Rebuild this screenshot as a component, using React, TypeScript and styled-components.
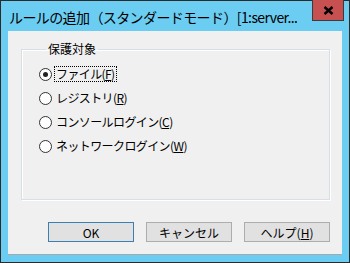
import React from "react";
import styled, { createGlobalStyle } from "styled-components";

const Global = createGlobalStyle`
  html, body { margin: 0; padding: 0; background: #ffffff; }
  body { font-family: "Noto Sans CJK JP", "Noto Sans", sans-serif; }
`;

const Window = styled.div`
  width: 350px;
  height: 263px;
  box-sizing: border-box;
  border: 1px solid #2b2b2b;
  background: #6bcdf2;
  display: flex;
  flex-direction: column;
  padding: 0 7px 7px 7px;
`;

const TitleBar = styled.div`
  height: 30px;
  display: flex;
  align-items: flex-start;
  justify-content: space-between;
`;

const Title = styled.div`
  font-family: "Noto Sans CJK JP", sans-serif;
  font-size: 14px;
  color: #000;
  line-height: 32px;
  margin-left: 1px;
  white-space: nowrap;
  overflow: hidden;
  letter-spacing: -0.6px;
`;

const CloseButton = styled.div`
  flex-shrink: 0;
  width: 32px;
  height: 21px;
  margin-top: -1px;
  margin-right: -2px;
  box-sizing: border-box;
  background: #c75050;
  border: 1px solid #3c3c3c;
  border-top: none;
  display: flex;
  align-items: center;
  justify-content: center;
`;

const Client = styled.div`
  flex: 1;
  background: #f0f0f0;
  border-bottom: 1px solid #a9a9a9;
  display: flex;
  flex-direction: column;
  padding: 11px 12px 0 13px;
`;

const Group = styled.fieldset`
  margin: 0;
  height: 158px;
  box-sizing: border-box;
  border: 1px solid #d5dfe5;
  box-shadow: inset 1px 1px 0 #ffffff, 1px 1px 0 #ffffff;
  padding: 6px 0 0 17px;
  display: flex;
  flex-direction: column;
`;

const Legend = styled.legend`
  font-size: 12px;
  color: #000;
  padding: 0 2px;
  margin-left: 7px;
  line-height: 14px;
`;

const Row = styled.label`
  display: flex;
  align-items: center;
  height: 24px;
  font-size: 12px;
  color: #000;
  gap: 3px;
`;

const Circle = styled.span<{ $checked?: boolean }>`
  width: 13px;
  height: 13px;
  box-sizing: border-box;
  border-radius: 50%;
  border: 1px solid #333;
  background: #fff;
  display: flex;
  align-items: center;
  justify-content: center;
  &::after {
    content: "";
    width: 5px;
    height: 5px;
    border-radius: 50%;
    background: ${(p) => (p.$checked ? "#222" : "transparent")};
  }
`;

const Text = styled.span<{ $focus?: boolean }>`
  padding: 0 1px;
  line-height: 14px;
  outline: ${(p) => (p.$focus ? "1px dotted #000" : "none")};
  letter-spacing: -0.6px;
`;

const Buttons = styled.div`
  display: flex;
  justify-content: flex-end;
  gap: 12px;
  margin-top: 22px;
`;

const Button = styled.div<{ $default?: boolean }>`
  width: 86px;
  height: 20px;
  box-sizing: border-box;
  background: #e1e1e1;
  border: 1px solid ${(p) => (p.$default ? "#3c7fb1" : "#adadad")};
  display: flex;
  align-items: center;
  justify-content: center;
  font-size: 12px;
  color: #000;
`;

const options = [
  { label: "ファイル", key: "F", checked: true },
  { label: "レジストリ", key: "R" },
  { label: "コンソールログイン", key: "C" },
  { label: "ネットワークログイン", key: "W" },
];

export default function App() {
  return (
    <>
      <Global />
      <Window>
        <TitleBar>
          <Title>ルールの追加（スタンダードモード）[1:server...</Title>
          <CloseButton>
            <svg width="11" height="9" viewBox="0 0 11 9">
              <path d="M1.5 1 L9.5 8 M9.5 1 L1.5 8" stroke="#000" strokeWidth="2.4" />
            </svg>
          </CloseButton>
        </TitleBar>
        <Client>
          <Group>
            <Legend>保護対象</Legend>
            {options.map((o) => (
              <Row key={o.key}>
                <Circle $checked={o.checked} />
                <Text $focus={o.checked}>
                  {o.label}(<u>{o.key}</u>)
                </Text>
              </Row>
            ))}
          </Group>
          <Buttons>
            <Button $default>OK</Button>
            <Button>キャンセル</Button>
            <Button>
              <span>
                ヘルプ(<u>H</u>)
              </span>
            </Button>
          </Buttons>
        </Client>
      </Window>
    </>
  );
}
